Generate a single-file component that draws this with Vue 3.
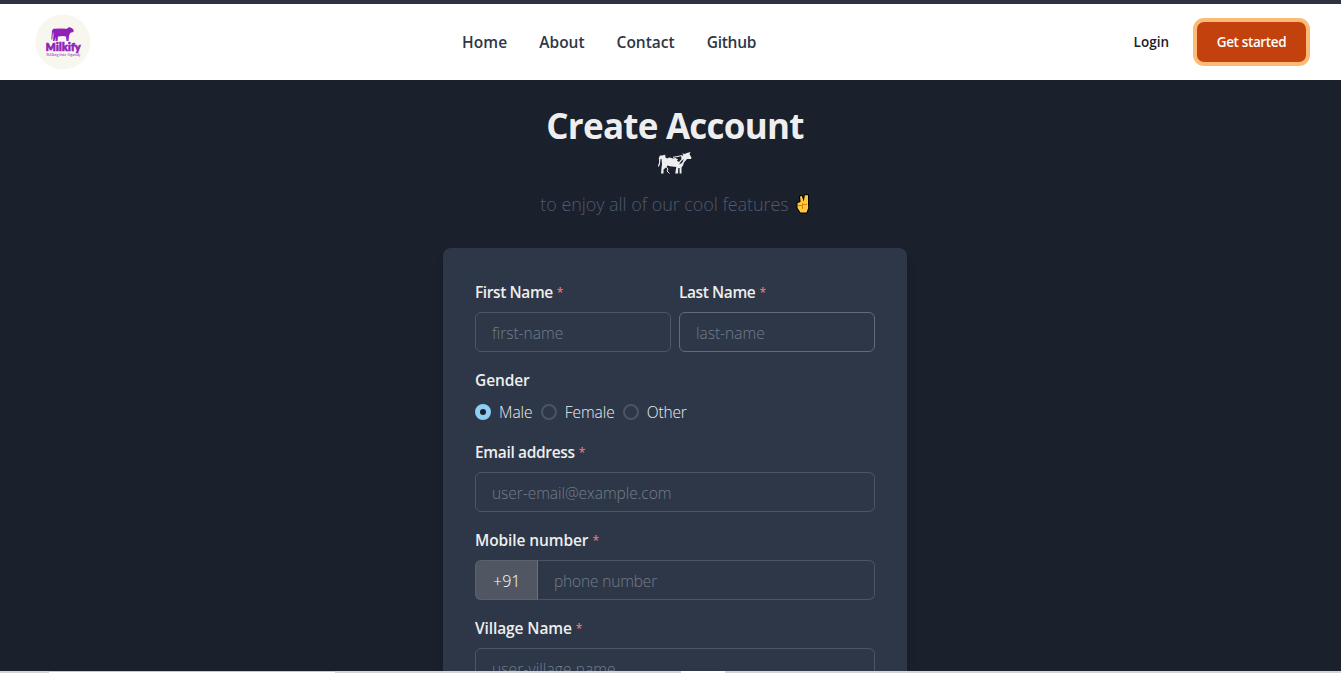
<script setup>
const links = ['Home', 'About', 'Contact', 'Github']
const genders = ['Male', 'Female', 'Other']
</script>

<template>
  <div class="window">
    <div class="page">
      <header class="header">
        <a class="logo" aria-label="Milkify">
          <svg width="56" height="56" viewBox="0 0 56 56">
            <circle cx="28" cy="28" r="27.5" fill="#f7f7ef" />
            <path fill="#9120b8" d="M18.500 14.800 Q26 14 32 14.800 L34 13 L36.500 14 L38.500 15.500 L38.500 18 L35.500 18.800 L34 21.500 L33.500 27 L31.500 27 L31 22.500 L28 22 L23 22.500 L22.500 27 L20.500 27 L20.500 23 L19.500 27 L18 27 L18.500 21 L18 17.500 L17.300 25.500 L16.300 25.500 L17 16.500Z" />
            <text x="28.2" y="37" class="logo-name" text-anchor="middle" textLength="35">Milkify</text>
            <text x="28.2" y="42.3" class="logo-tag" text-anchor="middle" textLength="34">Well-Being, Under · Organically</text>
          </svg>
        </a>
        <nav class="nav">
          <a v-for="l in links" :key="l" :class="'nav-' + l.toLowerCase()">{{ l }}</a>
        </nav>
        <div class="actions">
          <a class="login">Login</a>
          <button class="start">Get started</button>
        </div>
      </header>

      <main class="main">
        <h1 class="title">Create Account</h1>
        <svg class="cow" width="36" height="24" viewBox="0 0 36 24">
          <path fill="#eee" d="M5 4.500 L8 3.800 L11 6 L16 7.500 L24 5.500 L26.500 4 L25 2.300 L27.500 3 L30 2 L33.500 1 L32.500 3.200 L34.500 6.500 L34 8 L30 8 L27 11.500 L26 14.500 L24.500 16.500 L24.500 22.500 L22.600 22.500 L22.600 17 L21.300 17 L21 22.500 L18.200 22.500 L19.300 16 L13 15.200 L10.500 14.500 L9.500 16 L6.500 18.500 L6.500 22.500 L4 22.500 L4.500 17 L5 13 L4.500 8 L3.500 8 L3 13 L1.800 16 L1 15 L2.200 11 L1.800 7 L3 4.500Z" />
          <path fill="#1a202c" d="M17 4.500 L24 5 L24.500 8 L22 11 L20 9.800 L21 8 L19 7.500Z M8 4 L12.500 6 L10.500 7.500 L8.500 6.500Z M27 8 L25 12 L22 13.500 L24.300 10Z" />
          <path stroke="#eee" stroke-width="1" fill="none" d="M16 6.300 L25 4.600 M8.500 15 L11 18 L10 20 L12.500 22.500" />
        </svg>
        <p class="sub">
          <span>to enjoy all of our cool features</span>
          <svg width="14" height="20" viewBox="0 0 14 20">
            <path fill="#ffc83d" stroke="#000" stroke-width="2" stroke-linejoin="round" paint-order="stroke" d="M3.200 8.500 L4.600 7.800 L4 2.500 L5.800 2 L7.800 7.500 L8.800 1.200 L12 1.200 L12 10 L12.200 14 L10.500 18.500 L4.500 18.500 L1.500 14 L1.500 9Z" />
            <path stroke="#d67d00" stroke-width="1" fill="none" d="M2 11.500 H6.500 V15 M6.500 9 V10.500 H11" />
          </svg>
        </p>

        <form class="card" @submit.prevent>
          <div class="row">
            <div class="field">
              <label class="l-first">First Name</label><i>*</i>
              <input placeholder="first-name" />
            </div>
            <div class="field">
              <label class="l-last">Last Name</label><i>*</i>
              <input class="hovered" placeholder="last-name" />
            </div>
          </div>
          <div class="field">
            <label class="l-gender">Gender</label>
            <div class="radios">
              <span v-for="(g, n) in genders" :key="g" class="radio" :class="'r-' + g.toLowerCase()">
                <b :class="{ on: n === 0 }"></b><span>{{ g }}</span>
              </span>
            </div>
          </div>
          <div class="field">
            <label class="l-email">Email address</label><i>*</i>
            <input class="p-email" placeholder="user-email@example.com" />
          </div>
          <div class="field">
            <label class="l-mobile">Mobile number</label><i>*</i>
            <div class="group">
              <span class="addon">+91</span>
              <input class="p-phone" placeholder="phone number" />
            </div>
          </div>
          <div class="field">
            <label class="l-village">Village Name</label><i>*</i>
            <input class="p-village" placeholder="user-village name" />
          </div>
        </form>
      </main>
    </div>
    <div class="strip"><span class="seg first"></span><span class="seg second"></span></div>
  </div>
</template>

<style>
body { margin: 0; background: #1a202c; overflow: hidden; }
</style>

<style scoped>
* { box-sizing: border-box; }
.window {
  height: 673px;
  display: flex;
  flex-direction: column;
  overflow: hidden;
  background: #1a202c;
  color: #eee;
  font: 16px/24px "Open Sans", "Noto Sans", sans-serif;
}
.page { flex: 1; min-height: 0; overflow: hidden; border-top: 4px solid #2d3142; }
.header {
  height: 76px;
  background: #fff;
  display: flex;
  align-items: center;
  padding: 0 31px 0 35px;
}
.logo { height: 56px; width: 56px; display: block; }
.logo-name { font: 900 10.5px Lato, sans-serif; fill: #9120b8; stroke: #9120b8; stroke-width: .7; }
.logo-tag { font: 3px "Open Sans", sans-serif; fill: #9120b8; }
.nav { display: flex; gap: 32px; margin-left: 371px; color: #2d3748; font-weight: 600; font-size: 15.5px; }
.nav a { white-space: nowrap; }
.nav-home { letter-spacing: .1px; }
.nav-github { letter-spacing: -.25px; }
.actions { margin-left: auto; display: flex; align-items: center; color: #1a202c; font-size: 13.5px; font-weight: 600; }
.start {
  margin: 0 4px 0 28px;
  width: 109px;
  height: 40px;
  padding: 0;
  border: 0;
  border-radius: 7px;
  background: #c2410c;
  box-shadow: 0 0 0 4px #fdba74;
  color: #fff;
  font: inherit;
  letter-spacing: -.36px;
}
.main { padding: 24px 0 0 9px; display: flex; flex-direction: column; align-items: center; }
.title { margin: 0; font-size: 35px; line-height: 44px; font-weight: 700; letter-spacing: -.76px; white-space: nowrap; }
.cow { margin-top: 3px; }
.sub { margin: 15px 0 0; height: 28px; display: flex; align-items: center; gap: 7px; font-size: 18px; font-weight: 300; letter-spacing: -.06px; color: #4f5a6e; white-space: nowrap; }
.card {
  width: 464px;
  margin-top: 30px;
  padding: 32px;
  background: #2d3748;
  border-radius: 8px;
  box-shadow: 0 10px 15px -3px rgba(0, 0, 0, .1), 0 4px 6px -2px rgba(0, 0, 0, .05);
  display: flex;
  flex-direction: column;
  gap: 16px;
}
.row { display: flex; gap: 8px; }
.row .field { flex: 1; min-width: 0; }
.field label { display: inline-block; height: 24px; margin-bottom: 8px; vertical-align: top; font-size: 15.5px; font-weight: 600; letter-spacing: -.1px; white-space: nowrap; }
.field .l-first, .field .l-last { letter-spacing: -.4px; }
.field .l-email { letter-spacing: -.34px; }
.field i { display: inline-block; height: 24px; vertical-align: top; font-style: normal; color: #fc8181; margin-left: 4px; font-size: 12px; line-height: 25px; }
input {
  display: block;
  width: 100%;
  height: 40px;
  padding: 2px 16px 0;
  border: 1px solid #4b5565;
  border-radius: 6px;
  background: transparent;
  color: #eee;
  font: 300 15.5px "Open Sans", "Noto Sans", sans-serif;
  outline: none;
}
input::placeholder { color: #747d8b; opacity: 1; }
input.hovered { border-color: #636b78; }
.p-phone { letter-spacing: -.15px; }
.p-village { letter-spacing: .1px; }
.p-email { letter-spacing: -.04px; }
.radios { display: flex; gap: 8px; height: 24px; align-items: center; font-weight: 300; }
.radio { display: flex; align-items: center; gap: 8px; font-size: 15.5px; white-space: nowrap; }
.r-other { letter-spacing: -.2px; }
.radio b { width: 16px; height: 16px; border-radius: 50%; border: 2px solid #4b5563; }
.radio b.on { border: 5px solid #90cdf4; background: #1a202c; }
.group { display: flex; }
.addon { width: 63px; height: 40px; line-height: 40px; padding-left: 17px; font-weight: 300; color: #fff; background: #505762; border: 1px solid #5a626e; border-right-color: #6c737e; border-radius: 6px 0 0 6px; }
.group input { flex: 1; border-left: 0; border-radius: 0 6px 6px 0; }
.strip { height: 2px; flex: none; display: flex; background: #d5d5d5; }
.seg { height: 2px; background: #fff; border-top: 1px solid #c8c8c8; }
.first { width: 286px; margin-left: 49px; }
.second { width: 44px; margin-left: 346px; border: 0; }
</style>
